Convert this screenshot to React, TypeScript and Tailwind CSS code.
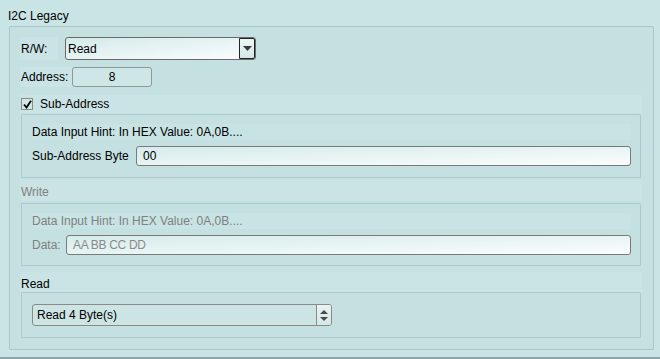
import React from 'react'

function TextBox({ value, className = '', muted = false }: { value: string; className?: string; muted?: boolean }) {
  return (
    <div
      className={`h-[20px] border border-[#7a7a7a] rounded-[3px] bg-gradient-to-br from-[#d6ebeb] to-[#fafdfd] flex items-center pl-[6px] ${
        muted ? 'text-[#8a8a8a]' : 'text-black'
      } ${className}`}
    >
      {value}
    </div>
  )
}

export default function App() {
  return (
    <div className="w-[660px] h-[359px] bg-[#c9e4e4] font-['Liberation_Sans',Arial,sans-serif] text-[12px] leading-[14px] text-black border-b-2 border-[#8fa6a6]">
      <div className="h-[26px] pl-[8px] pt-[9px]">I2C Legacy</div>

      <div className="ml-[9px] w-[645px] h-[324px] border border-[#aac6c6] rounded-tr-[2px] bg-[#c5e0e0] pl-[10px] pt-[10px]">
        {/* R/W */}
        <div className="flex h-[23px] items-center">
          <div className="w-[38px] h-[23px] bg-[#cae4e5] flex items-center pl-[1px]">R/W:</div>
          <div className="ml-[7px] w-[191px] h-[23px] border border-[#6a6a6a] rounded-[3px] bg-gradient-to-br from-[#d4eaea] to-[#fbfdfd] flex items-center">
            <span className="pl-[2px] flex-1">Read</span>
            <div className="w-[16px] h-[21px] border border-[#222] rounded-r-[2px] bg-gradient-to-b from-[#eef6f6] to-[#d2e6e6] flex items-center justify-center">
              <svg width="9" height="5" viewBox="0 0 9 5">
                <path d="M0 0h9L4.5 5z" fill="#3a3a3a" />
              </svg>
            </div>
          </div>
        </div>

        {/* Address */}
        <div className="flex h-[20px] items-center mt-[7px]">
          <div className="w-[52px] h-[20px] bg-[#cae4e5] flex items-center pl-[1px]">Address:</div>
          <div className="w-[80px] h-[20px] border border-[#8a9a9a] rounded-[3px] bg-[#cfe6e6] flex items-center justify-center">
            8
          </div>
        </div>

        {/* Sub-Address checkbox */}
        <div className="mt-[8px] w-[622px] h-[18px] bg-[#cae4e5] flex items-center pl-[1px]">
          <div className="w-[12px] h-[12px] border border-[#8a8a8a] bg-[#d2e8e8] flex items-center justify-center">
            <svg width="9" height="9" viewBox="0 0 9 9">
              <path d="M1 4.5l2.5 3L8 0.8" stroke="#000" strokeWidth="1.8" fill="none" />
            </svg>
          </div>
          <span className="ml-[7px]">Sub-Address</span>
        </div>

        <div className="ml-[1px] mt-[1px] w-[620px] h-[64px] border border-[#adc9c9] rounded-tr-[2px] pl-[10px] pt-[9px]">
          <div className="w-[599px] h-[16px] bg-[#c8e3e3] flex items-center">Data Input Hint: In HEX Value: 0A,0B....</div>
          <div className="flex items-center h-[20px] mt-[6px]">
            <span className="w-[104px]">Sub-Address Byte</span>
            <TextBox value="00" className="w-[495px]" />
          </div>
        </div>

        {/* Write */}
        <div className="mt-[2px] w-[622px] h-[21px] bg-[#cae4e5] flex items-center pl-[1px] pt-[3px] text-[#808080]">Write</div>
        <div className="ml-[1px] mt-[2px] w-[620px] h-[63px] border border-[#adc9c9] rounded-tr-[2px] pl-[10px] pt-[9px] text-[#808080]">
          <div className="w-[599px] h-[16px] bg-[#c8e3e3] flex items-center">Data Input Hint: In HEX Value: 0A,0B....</div>
          <div className="flex items-center h-[20px] mt-[6px]">
            <span className="w-[34px]">Data:</span>
            <TextBox value="AA BB CC DD" muted className="w-[565px] pl-[4px] tracking-[-0.3px]" />
          </div>
        </div>

        {/* Read */}
        <div className="mt-[6px] w-[622px] h-[20px] bg-[#cae4e5] flex items-center pl-[1px] pt-[3px]">Read</div>
        <div className="ml-[1px] w-[620px] h-[46px] border border-[#adc9c9] rounded-tr-[2px] pl-[10px] pt-[11px]">
          <div className="w-[300px] h-[22px] border border-[#8a8a8a] rounded-[3px] bg-[#cde4e4] flex items-center">
            <span className="flex-1 pl-[4px]">Read 4 Byte(s)</span>
            <div className="w-[15px] h-[20px] border-l border-[#8a8a8a] flex flex-col items-center justify-center gap-[3px] bg-gradient-to-b from-[#e8f3f3] to-[#d4e8e8] rounded-r-[2px]">
              <svg width="8" height="4" viewBox="0 0 8 4">
                <path d="M0 4h8L4 0z" fill="#4a4a4a" />
              </svg>
              <svg width="8" height="4" viewBox="0 0 8 4">
                <path d="M0 0h8L4 4z" fill="#4a4a4a" />
              </svg>
            </div>
          </div>
        </div>
      </div>
    </div>
  )
}
